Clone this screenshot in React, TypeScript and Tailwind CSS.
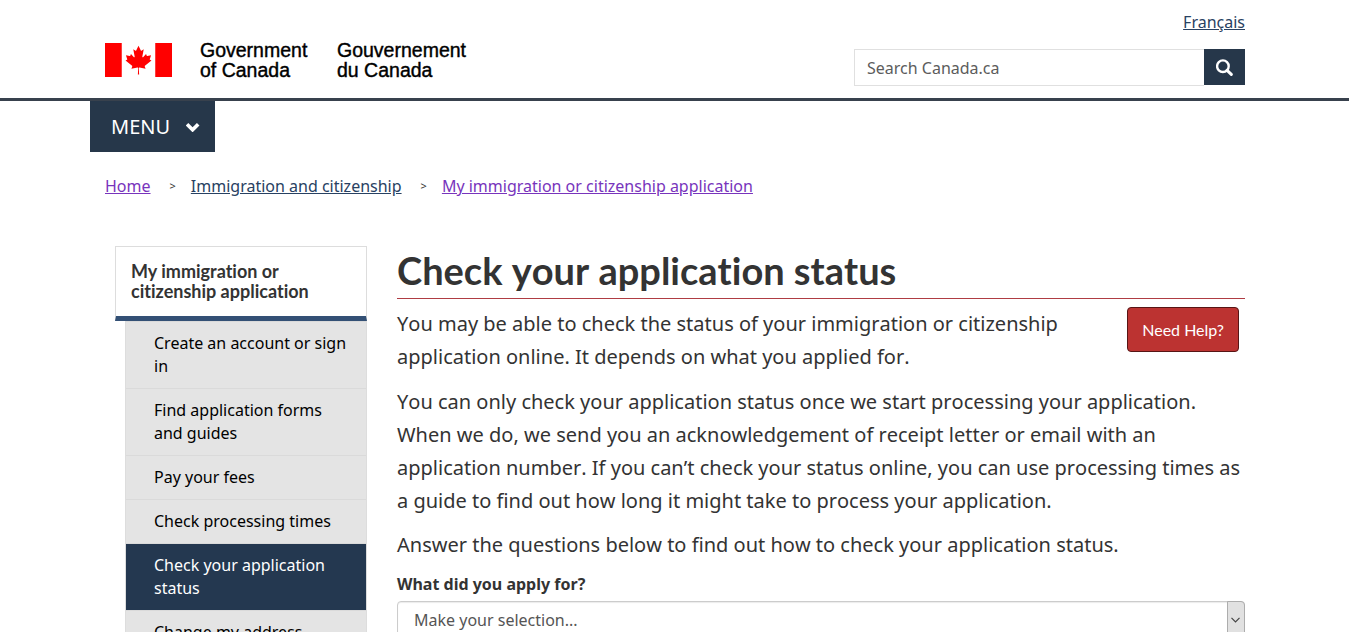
import React from "react";

const crumbs = [
  { label: "Home", visited: true },
  { label: "Immigration and citizenship", visited: false },
  { label: "My immigration or citizenship application", visited: true },
];

const sections = [
  "Create an account or sign in",
  "Find application forms and guides",
  "Pay your fees",
  "Check processing times",
  "Check your application status",
  "Change my address",
];

const current = "Check your application status";

function Signature() {
  return (
    <svg width="368" height="40" viewBox="0 0 368 40" role="img" aria-label="Government of Canada / Gouvernement du Canada">
      <svg x="0" y="3" width="67" height="34" viewBox="0 0 9600 4800" preserveAspectRatio="none" fill="#ff0000">
        <path d="M0 0h2400v4800H0zM7200 0h2400v4800H7200z" />
        <path d="m4890 4430-45-863a95 95 0 0 1 111-98l859 151-116-320a65 65 0 0 1 20-73l941-762-212-99a65 65 0 0 1-34-79l186-572-542 115a65 65 0 0 1-73-38l-105-247-423 454a65 65 0 0 1-111-57l204-1052-327 189a65 65 0 0 1-91-27l-332-652-332 652a65 65 0 0 1-91 27l-327-189 204 1052a65 65 0 0 1-111 57l-423-454-105 247a65 65 0 0 1-73 38l-542-115 186 572a65 65 0 0 1-34 79l-212 99 941 762a65 65 0 0 1 20 73l-116 320 859-151a95 95 0 0 1 111 98l-45 863z" />
      </svg>
      <g fontFamily="'Liberation Sans', Arial, sans-serif" fontSize="19.5" fill="#000" stroke="#000" strokeWidth="0.4">
        <text x="95" y="17">Government</text>
        <text x="95" y="37">of Canada</text>
        <text x="232" y="17">Gouvernement</text>
        <text x="232" y="37">du Canada</text>
      </g>
    </svg>
  );
}

function Header() {
  return (
    <header>
      <div className="border-b-3 border-[#38414d]">
        <div className="mx-auto flex h-[98px] max-w-[1169px] justify-between pr-[14px] pl-[15px]">
          <a href="#home" className="mt-10 h-10">
            <Signature />
          </a>
          <div className="flex flex-col items-end">
            <a href="#fr" lang="fr" className="mt-[10px] leading-6 text-[#284162] underline">
              Français
            </a>
            <form className="mt-[15px] flex items-start" role="search" onSubmit={(e) => e.preventDefault()}>
              <input
                type="search"
                aria-label="Search Canada.ca"
                placeholder="Search Canada.ca"
                className="h-[37px] w-[350px] border border-r-0 border-[#e0e0e0] bg-white px-3 outline-none placeholder:text-[#5c5c5c]"
              />
              <button type="submit" aria-label="Search" className="flex h-9 w-[41px] items-center justify-center bg-[#26374a] text-white">
                <svg width="18" height="18" viewBox="0 0 18 18" fill="none" stroke="currentColor">
                  <circle cx="6.9" cy="8.2" r="5.8" strokeWidth="2.4" />
                  <path d="M11.1 12.4 15.3 16.4" strokeWidth="3" strokeLinecap="round" />
                </svg>
              </button>
            </form>
          </div>
        </div>
      </div>
      <div className="mx-auto max-w-[1169px]">
        <button type="button" className="flex h-[51px] w-[125px] items-center gap-4 bg-[#26374a] pl-[21px] text-xl text-white">
          MENU
          <svg width="14" height="10" viewBox="0 0 14 10" fill="none" stroke="currentColor" strokeWidth="3.6">
            <path d="M1 2.2 6.6 7.8l5.6-5.6" />
          </svg>
        </button>
      </div>
    </header>
  );
}

function Breadcrumbs() {
  return (
    <nav aria-label="Breadcrumb" className="mx-auto max-w-[1169px] px-[15px] pt-[22px]">
      <ol className="flex flex-wrap items-center leading-6">
        {crumbs.map((c, i) => (
          <li key={c.label} className="flex items-center">
            {i > 0 && <span className="mr-[15px] ml-[19px] text-[11px] text-[#333333]">&gt;</span>}
            <a href="#crumb" className={c.visited ? "text-[#7834bc] underline" : "text-[#284162] underline"}>
              {c.label}
            </a>
          </li>
        ))}
      </ol>
    </nav>
  );
}

function SideNav() {
  return (
    <nav aria-label="My immigration or citizenship application" className="w-[252px] shrink-0">
      <h2 className="border border-b-[5px] border-[#dddddd] border-b-[#335075] px-[15px] pt-[14px] pb-[15px] font-[Lato,sans-serif] text-lg leading-5 font-bold [font-variant-ligatures:none]">
        <a href="#application" className="block">
          My immigration or citizenship application
        </a>
      </h2>
      <ul className="ml-[10px] border-x border-[#dddddd] bg-[#e4e4e4] leading-[23px] text-black">
        {sections.map((s) => (
          <li key={s} className="border-t border-[#dadada]">
            <a
              href="#section"
              aria-current={s === current ? "page" : undefined}
              className={s === current ? "block bg-[#243850] py-[10px] pr-4 pl-7 text-white" : "block py-[10px] pr-4 pl-7"}
            >
              {s}
            </a>
          </li>
        ))}
      </ul>
    </nav>
  );
}

function Content() {
  return (
    <main className="min-w-0 flex-1 [font-kerning:none]">
      <h1 className="border-b border-[#af3c43] pt-px pb-[5px] font-[Lato,sans-serif] text-[38px] leading-[46px] font-bold [font-variant-ligatures:none]">
        Check your application status
      </h1>
      <div className="flex flex-col gap-[11px] pt-2 text-xl leading-[33px]">
        <div className="flex items-start justify-between gap-6">
          <p className="mb-px">
            You may be able to check the status of your immigration or citizenship application online. It depends on
            what you applied for.
          </p>
          <a
            href="#help"
            className="mr-[6px] shrink-0 rounded border border-[#571515] bg-[#bc3331] px-[14px] py-[10px] font-[Lato,sans-serif] text-base leading-[23px] text-white [font-kerning:normal]"
          >
            Need Help?
          </a>
        </div>
        <p>
          You can only check your application status once we start processing your application. When we do, we send you
          an acknowledgement of receipt letter or email with an application number. If you can’t check your status
          online, you can use processing times as a guide to find out how long it might take to process your
          application.
        </p>
        <p>Answer the questions below to find out how to check your application status.</p>
      </div>
      <label htmlFor="application-type" className="mt-3 block leading-[23px] font-bold">
        What did you apply for?
      </label>
      <div className="relative mt-[5px] mb-10">
        <select
          id="application-type"
          className="block h-[38px] w-full appearance-none rounded border border-[#cccccc] bg-white pr-8 pl-4 text-[#555555] shadow-[inset_0_1px_1px_rgba(0,0,0,0.08)]"
        >
          <option>Make your selection...</option>
        </select>
        <span className="pointer-events-none absolute inset-y-0 right-0 flex w-[18px] items-center justify-center rounded-r border border-[#adadad] bg-[#e1e1e1]">
          <svg width="10" height="6" viewBox="0 0 10 6" fill="none" stroke="#444444" strokeWidth="1.2">
            <path d="M.5.8l4 4 4-4" />
          </svg>
        </span>
      </div>
    </main>
  );
}

export default function App() {
  return (
    <div className="h-screen overflow-y-auto bg-white font-['Noto_Sans',sans-serif] text-base text-[#333333] [scrollbar-width:none]">
      <Header />
      <Breadcrumbs />
      <div className="mx-auto flex max-w-[1169px] gap-[30px] pt-12 pr-[14px] pl-[25px]">
        <SideNav />
        <Content />
      </div>
    </div>
  );
}
